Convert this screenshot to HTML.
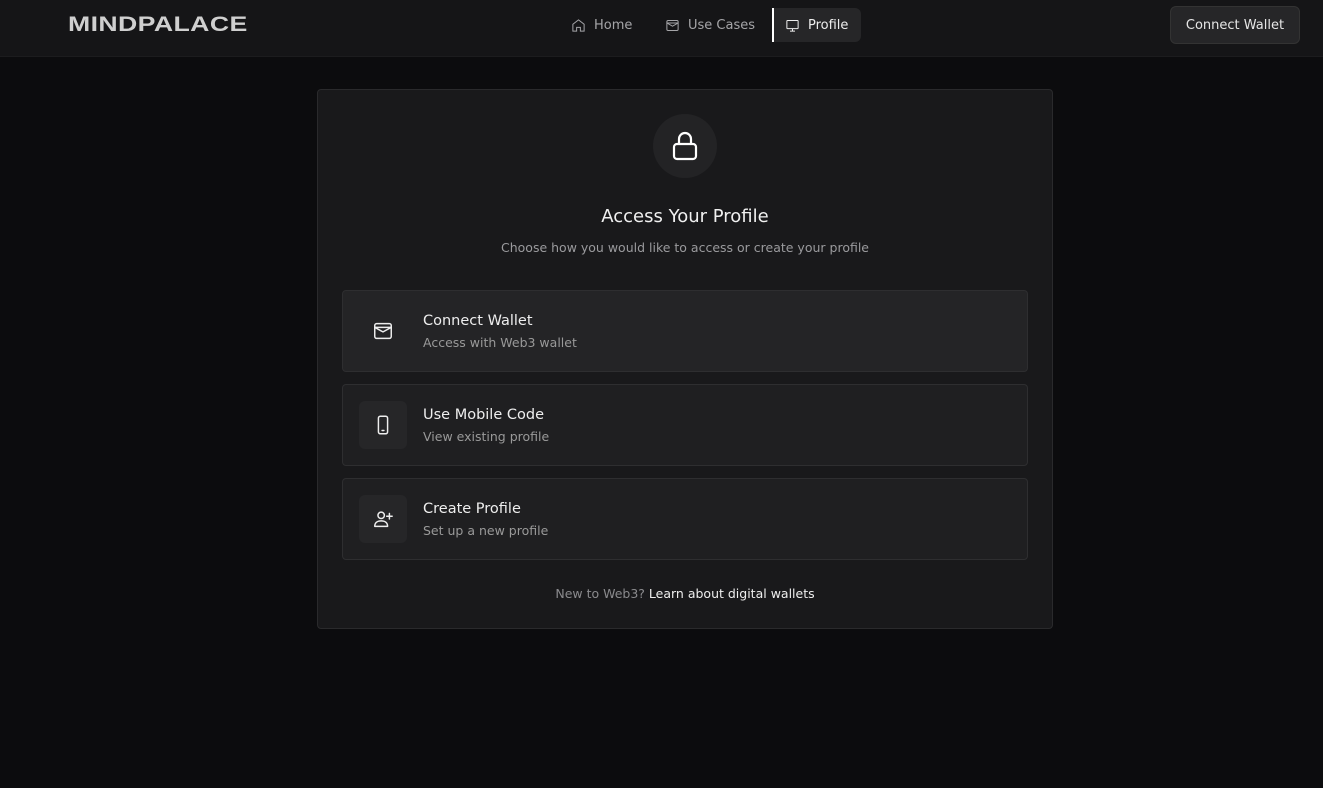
<!DOCTYPE html>
<html><head><meta charset="utf-8"><style>
*{box-sizing:border-box;margin:0;padding:0}
body{width:1323px;height:788px;background:#0c0c0e;font-family:"DejaVu Sans","Liberation Sans",sans-serif;color:#eee;position:relative;overflow:hidden}
.nav{position:absolute;left:0;top:0;width:1323px;height:57px;background:#151517;border-bottom:1px solid #1c1c1e}
.logo{position:absolute;left:68px;top:13px;font-family:"Liberation Sans",sans-serif;font-weight:900;font-size:21px;letter-spacing:0.3px;color:#cfcfcf;transform:scaleX(1.27);transform-origin:left;}
.ni{position:absolute;top:8px;height:34px;display:flex;align-items:center;font-size:13px;color:#a5a5a8;gap:8px}
.ni svg{width:15px;height:15px;stroke:currentColor;fill:none;stroke-width:1.6}
.prof{left:772px;width:89px;background:#262628;border-radius:0 6px 6px 0;border-left:2px solid #fff;padding-left:11px;color:#eee}
.btn{position:absolute;left:1170px;top:6px;width:130px;height:38px;background:#262628;border:1px solid #333;border-radius:6px;font-size:13px;color:#e6e6e6;display:flex;align-items:center;justify-content:center}
.card{position:absolute;left:317px;top:89px;width:736px;height:540px;background:#19191b;border:1px solid #2a2a2c;border-radius:4px}
.lock{position:absolute;left:335px;top:24px;width:64px;height:64px;border-radius:50%;background:#232325;display:flex;align-items:center;justify-content:center}
h1{position:absolute;top:116px;width:100%;text-align:center;font-weight:normal;font-size:18px;color:#f0f0f0}
.sub{position:absolute;top:150px;width:100%;text-align:center;font-size:12.5px;color:#9a9a9d}
.opt{position:absolute;left:24px;width:686px;height:82px;background:#1f1f21;border:1px solid #2e2e30;border-radius:4px}
.opt.a{background:#242426}
.ic{position:absolute;left:16px;top:16px;width:48px;height:48px;border-radius:6px;background:#262628;display:flex;align-items:center;justify-content:center}
.opt.a .ic{background:transparent}
.ic svg{width:22px;height:22px;stroke:#eee;fill:none;stroke-width:1.6;stroke-linecap:round;stroke-linejoin:round}
.t{position:absolute;left:80px;top:22px;font-size:14.5px;color:#eee}
.d{position:absolute;left:80px;top:44px;font-size:12.5px;color:#999}
.foot{position:absolute;top:496px;width:100%;text-align:center;font-size:12.5px;color:#8a8a8d}
.foot span{color:#eee}
</style></head><body>
<div class="nav">
<div class="logo">MINDPALACE</div>
<div class="ni" style="left:571px"><svg viewBox="0 0 24 24"><path d="M3 10l9-7 9 7v11h-6v-6h-6v6H3z"/></svg>Home</div>
<div class="ni" style="left:665px"><svg viewBox="0 0 24 24"><rect x="3" y="4" width="18" height="16" rx="2"/><path d="M3 8h18M3 8l9 5 9-5"/></svg>Use Cases</div>
<div class="ni prof"><svg viewBox="0 0 24 24"><rect x="3" y="4" width="18" height="13" rx="1"/><path d="M8 21h8M12 17v4"/></svg>Profile</div>
<div class="btn">Connect Wallet</div>
</div>
<div class="card">
<div class="lock"><svg width="26" height="30" viewBox="0 0 26 30" fill="none" stroke="#fff" stroke-width="2.2"><rect x="2" y="13" width="22" height="15" rx="3"/><path d="M7 13V8a6 6 0 0 1 12 0v5"/></svg></div>
<h1>Access Your Profile</h1>
<div class="sub">Choose how you would like to access or create your profile</div>
<div class="opt a" style="top:200px"><div class="ic"><svg viewBox="0 0 24 24"><rect x="3" y="4" width="18" height="16" rx="2"/><path d="M3 8h18M3 8l9 5 9-5"/></svg></div><div class="t">Connect Wallet</div><div class="d">Access with Web3 wallet</div></div>
<div class="opt" style="top:294px"><div class="ic"><svg viewBox="0 0 24 24"><rect x="7" y="2.5" width="10" height="19" rx="2"/><path d="M11 18h2"/></svg></div><div class="t">Use Mobile Code</div><div class="d">View existing profile</div></div>
<div class="opt" style="top:388px"><div class="ic"><svg viewBox="0 0 24 24"><circle cx="10" cy="8" r="3.5"/><path d="M3 20c0-4 3-6 7-6s7 2 7 6zM19 6v6M16 9h6"/></svg></div><div class="t">Create Profile</div><div class="d">Set up a new profile</div></div>
<div class="foot">New to Web3? <span>Learn about digital wallets</span></div>
</div>
</body></html>
